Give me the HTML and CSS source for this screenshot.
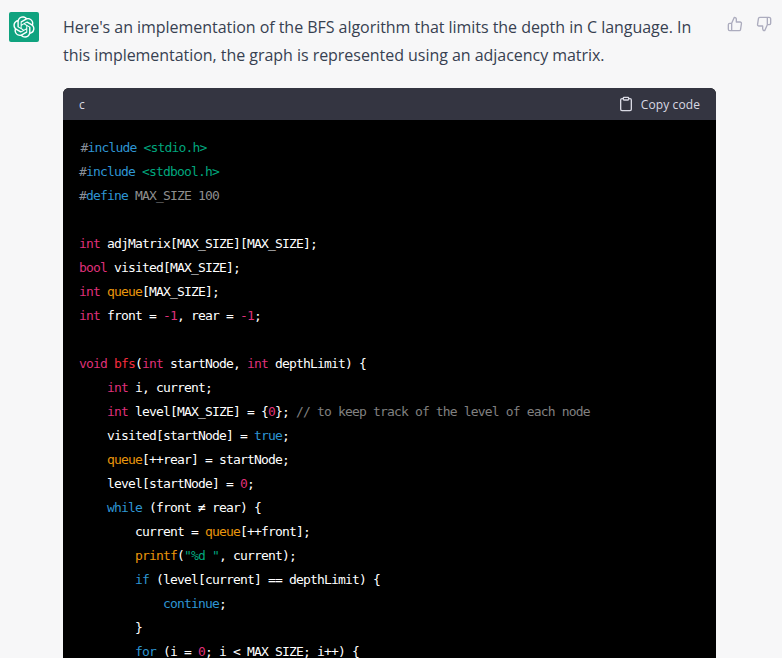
FILE: index.html
```html
<!DOCTYPE html>
<html lang="en">
  <head>
    <meta charset="UTF-8" />
    <meta name="viewport" content="width=device-width, initial-scale=1.0" />
    <title>BFS with depth limit</title>
    <link rel="stylesheet" href="styles.css">
  </head>
  <body>
    <div class="message">
      <div class="avatar">
        <svg class="logo" viewBox="0 0 41 41" fill="currentColor">
          <path d="M37.5324 16.8707C37.9808 15.5241 38.1363 14.0974 37.9886 12.6859C37.8409 11.2744 37.3934 9.91076 36.676 8.68622C35.6126 6.83404 33.9882 5.3676 32.0373 4.4985C30.0864 3.62941 27.9098 3.40259 25.8215 3.85078C24.8796 2.7893 23.7219 1.94125 22.4257 1.36341C21.1295 0.785575 19.7249 0.491269 18.3058 0.500197C16.1708 0.495044 14.0893 1.16803 12.3614 2.42214C10.6335 3.67624 9.34853 5.44666 8.6917 7.47815C7.30085 7.76286 5.98686 8.3414 4.8377 9.17505C3.68854 10.0087 2.73073 11.0782 2.02839 12.312C0.956464 14.1591 0.498905 16.2988 0.721698 18.4228C0.944492 20.5467 1.83612 22.5449 3.268 24.1293C2.81966 25.4759 2.66413 26.9026 2.81182 28.3141C2.95951 29.7256 3.40701 31.0892 4.12437 32.3138C5.18791 34.1659 6.8123 35.6322 8.76321 36.5013C10.7141 37.3704 12.8907 37.5973 14.9789 37.1492C15.9208 38.2107 17.0786 39.0587 18.3747 39.6366C19.6709 40.2144 21.0755 40.5087 22.4946 40.4998C24.6307 40.5054 26.7133 39.8321 28.4418 38.5772C30.1704 37.3223 31.4556 35.5506 32.1119 33.5179C33.5027 33.2332 34.8167 32.6547 35.9659 31.821C37.115 30.9874 38.0728 29.9178 38.7752 28.684C39.8458 26.8371 40.3023 24.6979 40.0789 22.5748C39.8556 20.4517 38.9639 18.4544 37.5324 16.8707ZM22.4978 37.8849C20.7443 37.8874 19.0459 37.2733 17.6994 36.1501C17.7601 36.117 17.8666 36.0586 17.936 36.0161L25.9004 31.4156C26.1003 31.3019 26.2663 31.137 26.3813 30.9378C26.4964 30.7386 26.5563 30.5124 26.5549 30.2825V19.0542L29.9213 20.998C29.9389 21.0068 29.9541 21.0198 29.9656 21.0359C29.977 21.052 29.9842 21.0707 29.9867 21.0902V30.3889C29.9842 32.375 29.1946 34.2791 27.7909 35.6841C26.3872 37.0892 24.4838 37.8806 22.4978 37.8849ZM6.39227 31.0064C5.51397 29.4888 5.19742 27.7107 5.49804 25.9832C5.55718 26.0187 5.66048 26.0818 5.73461 26.1244L13.699 30.7248C13.8975 30.8408 14.1233 30.902 14.3532 30.902C14.583 30.902 14.8088 30.8408 15.0073 30.7248L24.731 25.1103V28.9979C24.7321 29.0177 24.7283 29.0376 24.7199 29.0556C24.7115 29.0736 24.6988 29.0893 24.6829 29.1012L16.6317 33.7497C14.9096 34.7416 12.8643 35.0097 10.9447 34.4954C9.02506 33.9811 7.38785 32.7263 6.39227 31.0064ZM4.29707 13.6194C5.17156 12.0998 6.55279 10.9364 8.19885 10.3327C8.19885 10.4013 8.19491 10.5228 8.19491 10.6071V19.808C8.19351 20.0378 8.25334 20.2638 8.36823 20.4629C8.48312 20.6619 8.64893 20.8267 8.84863 20.9404L18.5723 26.5542L15.206 28.4979C15.1894 28.5089 15.1703 28.5155 15.1505 28.5173C15.1307 28.5191 15.1107 28.516 15.0924 28.5082L7.04046 23.8557C5.32135 22.8601 4.06716 21.2235 3.55289 19.3046C3.03862 17.3858 3.30624 15.3413 4.29707 13.6194ZM31.955 20.0556L22.2312 14.4411L25.5976 12.4981C25.6142 12.4872 25.6333 12.4805 25.6531 12.4787C25.6729 12.4769 25.6928 12.4801 25.7111 12.4879L33.7631 17.1364C34.9967 17.849 36.0017 18.8982 36.6606 20.1613C37.3194 21.4244 37.6047 22.849 37.4832 24.2684C37.3617 25.6878 36.8382 27.0432 35.9743 28.1759C35.1103 29.3086 33.9415 30.1717 32.6047 30.6641C32.6047 30.5947 32.6047 30.4733 32.6047 30.3889V21.188C32.6066 20.9586 32.5474 20.7328 32.4332 20.5338C32.319 20.3348 32.154 20.1698 31.955 20.0556ZM35.3055 15.0128C35.2464 14.9765 35.1431 14.9142 35.069 14.8717L27.1045 10.2712C26.906 10.1554 26.6803 10.0943 26.4504 10.0943C26.2206 10.0943 25.9948 10.1554 25.7963 10.2712L16.0726 15.8858V11.9982C16.0715 11.9783 16.0753 11.9585 16.0837 11.9405C16.0921 11.9225 16.1048 11.9068 16.1207 11.8949L24.1719 7.25025C25.4053 6.53903 26.8158 6.19376 28.2383 6.25482C29.6608 6.31589 31.0364 6.78077 32.2044 7.59508C33.3723 8.40939 34.2842 9.53945 34.8334 10.8531C35.3826 12.1667 35.5464 13.6095 35.3055 15.0128ZM14.2424 21.9419L10.8752 19.9981C10.8576 19.9893 10.8423 19.9763 10.8309 19.9602C10.8195 19.9441 10.8122 19.9254 10.8098 19.9058V10.6071C10.8107 9.18295 11.2173 7.78848 11.9819 6.58696C12.7466 5.38544 13.8377 4.42659 15.1275 3.82264C16.4173 3.21869 17.8524 2.99464 19.2649 3.1767C20.6775 3.35876 22.0089 3.93941 23.1034 4.85067C23.0427 4.88379 22.937 4.94215 22.8668 4.98473L14.9024 9.58517C14.7025 9.69878 14.5366 9.86356 14.4215 10.0626C14.3065 10.2616 14.2466 10.4877 14.2479 10.7175L14.2424 21.9419ZM16.071 17.9991L20.4018 15.4978L24.7325 17.9975V22.9985L20.4018 25.4983L16.071 22.9985V17.9991Z"/>
        </svg>
      </div>

      <div class="content">
        <p class="intro">Here's an implementation of the BFS algorithm that limits the depth in C language. In this implementation, the graph is represented using an adjacency matrix.</p>

        <div class="code-block">
          <div class="code-head">
            <span>c</span>
            <button class="copy-button">
              <svg class="icon" viewBox="0 0 24 24"><path d="M16 4h2a2 2 0 0 1 2 2v14a2 2 0 0 1-2 2H6a2 2 0 0 1-2-2V6a2 2 0 0 1 2-2h2"/><rect x="8" y="2" width="8" height="4" rx="1" ry="1"/></svg>
              Copy code
            </button>
          </div>
<pre class="code"><code><span class="first-line"><span class="hash">#</span><span class="kw">include</span> <span class="str">&lt;stdio.h&gt;</span></span>
<span class="hash">#</span><span class="kw">include</span> <span class="str">&lt;stdbool.h&gt;</span>
<span class="hash">#</span><span class="kw">define</span> <span class="meta">MAX_SIZE 100</span>

<span class="type">int</span> adjMatrix[MAX_SIZE][MAX_SIZE];
<span class="type">bool</span> visited[MAX_SIZE];
<span class="type">int</span> <span class="fn">queue</span>[MAX_SIZE];
<span class="type">int</span> front = <span class="type">-1</span>, rear = <span class="type">-1</span>;

<span class="type">void</span> <span class="title">bfs</span>(<span class="type">int</span> startNode, <span class="type">int</span> depthLimit) {
    <span class="type">int</span> i, current;
    <span class="type">int</span> level[MAX_SIZE] = {<span class="type">0</span>}; <span class="comment">// to keep track of the level of each node</span>
    visited[startNode] = <span class="kw">true</span>;
    <span class="fn">queue</span>[++rear] = startNode;
    level[startNode] = <span class="type">0</span>;
    <span class="kw">while</span> (front ≠ rear) {
        current = <span class="fn">queue</span>[++front];
        <span class="fn">printf</span>(<span class="str">"%d "</span>, current);
        <span class="kw">if</span> (level[current] == depthLimit) {
            <span class="kw">continue</span>;
        }
        <span class="kw">for</span> (i = <span class="type">0</span>; i &lt; MAX_SIZE; i++) {
</code></pre>
        </div>
      </div>

      <div class="actions">
        <svg class="icon" viewBox="0 0 24 24"><path d="M14 9V5a3 3 0 0 0-3-3l-4 9v11h11.28a2 2 0 0 0 2-1.7l1.38-9a2 2 0 0 0-2-2.3zM7 22H4a2 2 0 0 1-2-2v-7a2 2 0 0 1 2-2h3"/></svg>
        <svg class="icon" viewBox="0 0 24 24"><path d="M10 15v4a3 3 0 0 0 3 3l4-9V2H5.72a2 2 0 0 0-2 1.7l-1.38 9a2 2 0 0 0 2 2.3zm7-13h2.67A2.31 2.31 0 0 1 22 4v7a2.31 2.31 0 0 1-2.33 2H17"/></svg>
      </div>
    </div>
  </body>
</html>
```

FILE: styles.css
```css
html,
body {
  height: 100%;
  overflow: hidden;
}

body {
  margin: 0;
  background: #f7f7f8;
  color: #374151;
  font-family: "Open Sans", "Noto Sans", Arial, sans-serif;
}

.message {
  display: flex;
  padding: 12px 0 0 9px;
}

.avatar {
  flex: none;
  display: flex;
  align-items: center;
  justify-content: center;
  width: 30px;
  height: 30px;
  margin-right: 24px;
  border-radius: 2px;
  background: #10a37f;
  color: #fff;
}

.logo {
  width: 22px;
  height: 22px;
}

.content {
  flex: none;
  width: 653px;
}

.intro {
  margin: 1px 0 19px;
  font-size: 16px;
  line-height: 28px;
  letter-spacing: -0.04px;
}

.code-block {
  border-radius: 6px 6px 0 0;
  overflow: hidden;
  background: #000;
}

.code-head {
  display: flex;
  align-items: center;
  justify-content: space-between;
  height: 32px;
  padding: 0 16px;
  background: #343541;
  color: #d9d9e3;
  font-size: 12px;
}

.copy-button {
  display: flex;
  align-items: center;
  gap: 7px;
  padding: 0;
  border: none;
  background: none;
  color: inherit;
  font: inherit;
  letter-spacing: 0.1px;
}

.code {
  margin: 0;
  padding: 16px;
  color: #fff;
  font-family: "DejaVu Sans Mono", "Liberation Mono", monospace;
  font-size: 13px;
  line-height: 24px;
  letter-spacing: -0.83px;
}

.code code {
  font: inherit;
}

.first-line {
  margin-left: 1.5px;
}

.hash { color: #8a9099; }
.kw { color: #2e95d3; }
.str { color: #00a67d; }
.meta { color: #8e8e8e; }
.type { color: #df3079; }
.title { color: #f22c3d; }
.fn { color: #e9950c; }
.comment { color: #808080; }

.actions {
  display: flex;
  gap: 13px;
  margin: 4px 0 0 11px;
}

.icon {
  flex: none;
  width: 16px;
  height: 16px;
  fill: none;
  stroke: currentColor;
  stroke-width: 2;
  stroke-linecap: round;
  stroke-linejoin: round;
}

.actions .icon {
  color: #acacbe;
}
```
